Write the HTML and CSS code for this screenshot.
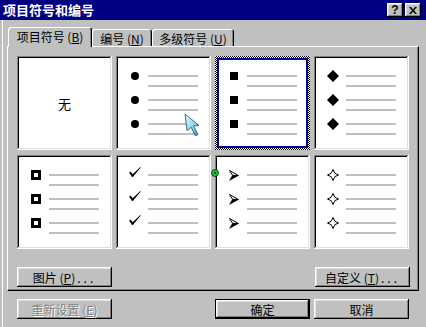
FILE: index.html
```html
<!DOCTYPE html>
<html lang="zh-CN">
<head>
    <meta charset="UTF-8">
    <title>项目符号和编号</title>
    <link rel="stylesheet" href="styles.css">
</head>
<body>

    <!-- Title bar -->
    <div class="titlebar">
        <span class="title">项目符号和编号</span>
        <div class="caption-buttons">
            <button class="cap-btn">?</button>
            <button class="cap-btn">
                <svg width="8" height="7" viewBox="0 0 8 7"><path d="M0 0h2l2 2.5L6 0h2L5 3.5 8 7H6L4 4.5 2 7H0l3-3.5z" fill="#000"/></svg>
            </button>
        </div>
    </div>

    <div class="dialog">
        <!-- Tabs -->
        <div class="tabs">
            <div class="tab active">项目符号 (<u>B</u>)</div>
            <div class="tab tab-num">编号 (<u>N</u>)</div>
            <div class="tab tab-multi">多级符号 (<u>U</u>)</div>
        </div>

        <div class="panel">
            <div class="gallery">
                <div class="cell cell-none">无</div>

                <div class="cell">
                    <div class="item"><span class="mark"><i class="dot"></i></span><span class="lines"></span></div>
                    <div class="item"><span class="mark"><i class="dot"></i></span><span class="lines"></span></div>
                    <div class="item"><span class="mark"><i class="dot"></i></span><span class="lines"></span></div>
                </div>

                <div class="focus">
                    <div class="cell selected">
                        <div class="item"><span class="mark"><i class="square"></i></span><span class="lines"></span></div>
                        <div class="item"><span class="mark"><i class="square"></i></span><span class="lines"></span></div>
                        <div class="item"><span class="mark"><i class="square"></i></span><span class="lines"></span></div>
                    </div>
                </div>

                <div class="cell">
                    <div class="item"><span class="mark"><svg width="12" height="12" viewBox="0 0 12 12"><path d="M6 0l6 6-6 6-6-6z"/></svg></span><span class="lines"></span></div>
                    <div class="item"><span class="mark"><svg width="12" height="12" viewBox="0 0 12 12"><path d="M6 0l6 6-6 6-6-6z"/></svg></span><span class="lines"></span></div>
                    <div class="item"><span class="mark"><svg width="12" height="12" viewBox="0 0 12 12"><path d="M6 0l6 6-6 6-6-6z"/></svg></span><span class="lines"></span></div>
                </div>

                <div class="cell">
                    <div class="item"><span class="mark"><i class="box"></i></span><span class="lines"></span></div>
                    <div class="item"><span class="mark"><i class="box"></i></span><span class="lines"></span></div>
                    <div class="item"><span class="mark"><i class="box"></i></span><span class="lines"></span></div>
                </div>

                <div class="cell">
                    <div class="item"><span class="mark"><svg class="check" width="12" height="10" viewBox="0 0 12 10"><path d="M0 5.5l1.8-.8L3.6 7.2 11.4 0l.4.4L3.8 10H3z"/></svg></span><span class="lines"></span></div>
                    <div class="item"><span class="mark"><svg class="check" width="12" height="10" viewBox="0 0 12 10"><path d="M0 5.5l1.8-.8L3.6 7.2 11.4 0l.4.4L3.8 10H3z"/></svg></span><span class="lines"></span></div>
                    <div class="item"><span class="mark"><svg class="check" width="12" height="10" viewBox="0 0 12 10"><path d="M0 5.5l1.8-.8L3.6 7.2 11.4 0l.4.4L3.8 10H3z"/></svg></span><span class="lines"></span></div>
                </div>

                <div class="cell">
                    <div class="item"><span class="mark"><svg width="10" height="11" viewBox="0 0 10 11"><path d="M.5.5l9 5-6-.2z" fill="#fff" stroke="#000"/><path d="M3.2 5.3L10 5.5 0 11z"/></svg></span><span class="lines"></span></div>
                    <div class="item"><span class="mark"><svg width="10" height="11" viewBox="0 0 10 11"><path d="M.5.5l9 5-6-.2z" fill="#fff" stroke="#000"/><path d="M3.2 5.3L10 5.5 0 11z"/></svg></span><span class="lines"></span></div>
                    <div class="item"><span class="mark"><svg width="10" height="11" viewBox="0 0 10 11"><path d="M.5.5l9 5-6-.2z" fill="#fff" stroke="#000"/><path d="M3.2 5.3L10 5.5 0 11z"/></svg></span><span class="lines"></span></div>
                </div>

                <div class="cell">
                    <div class="item"><span class="mark"><svg width="12" height="12" viewBox="0 0 12 12"><path d="M6 .5Q6.8 5.2 11.5 6 6.8 6.8 6 11.5 5.2 6.8.5 6 5.2 5.2 6 .5z" fill="none" stroke="#000"/></svg></span><span class="lines"></span></div>
                    <div class="item"><span class="mark"><svg width="12" height="12" viewBox="0 0 12 12"><path d="M6 .5Q6.8 5.2 11.5 6 6.8 6.8 6 11.5 5.2 6.8.5 6 5.2 5.2 6 .5z" fill="none" stroke="#000"/></svg></span><span class="lines"></span></div>
                    <div class="item"><span class="mark"><svg width="12" height="12" viewBox="0 0 12 12"><path d="M6 .5Q6.8 5.2 11.5 6 6.8 6.8 6 11.5 5.2 6.8.5 6 5.2 5.2 6 .5z" fill="none" stroke="#000"/></svg></span><span class="lines"></span></div>
                </div>
            </div>

            <div class="panel-actions">
                <button class="btn">图片 (<u>P</u>)<span class="dots">...</span></button>
                <button class="btn">自定义 (<u>T</u>)<span class="dots">...</span></button>
            </div>
        </div>

        <!-- Dialog buttons -->
        <div class="actions">
            <button class="btn" disabled>重新设置 (<u>E</u>)</button>
            <span class="spacer"></span>
            <button class="btn default">确定</button>
            <button class="btn">取消</button>
        </div>
    </div>

    <!-- mouse pointer and the small marker over the gallery -->
    <svg class="pointer" width="18" height="25" viewBox="0 0 18 25">
        <defs>
            <linearGradient id="ptr" x1="0" y1="0" x2="1" y2="1">
                <stop offset="0" stop-color="#e8fbff"/>
                <stop offset="0.6" stop-color="#8cd2ee"/>
                <stop offset="1" stop-color="#3a88b8"/>
            </linearGradient>
        </defs>
        <path d="M1 1l14 11.5-5.5.4 4.5 8.6-2.6 1.4-4.3-8.7-4 3.6z" fill="url(#ptr)" stroke="#2d5f86" stroke-width="0.9"/>
    </svg>
    <span class="marker"></span>

</body>
</html>
```

FILE: styles.css
```css
body {
    margin: 0;
    width: 426px;
    height: 327px;
    overflow: hidden;
    position: relative;
    background-color: #c0c0c0;
    font-family: "Noto Sans CJK SC", "Liberation Sans", sans-serif;
    font-size: 12px;
    color: #000;
}

u {
    text-decoration: underline;
    text-underline-offset: 1px;
}

/* Title bar */
.titlebar {
    height: 20px;
    background-color: #000080;
    display: flex;
    align-items: center;
    justify-content: space-between;
    padding: 0 5px 0 3px;
}

.title {
    color: #fff;
    font-size: 13px;
    font-weight: bold;
    line-height: 20px;
}

.caption-buttons {
    display: flex;
    gap: 2px;
}

.cap-btn {
    width: 16px;
    height: 14px;
    padding: 0;
    border: none;
    background-color: #c0c0c0;
    box-shadow: inset -1px -1px #000, inset 1px 1px #fff, inset -2px -2px #808080, inset 2px 2px #dfdfdf;
    font-family: "Liberation Sans", sans-serif;
    font-size: 12px;
    font-weight: bold;
    line-height: 14px;
    display: flex;
    align-items: center;
    justify-content: center;
}

/* Dialog body */
.dialog {
    margin-left: 2px;
    border-left: 1px solid #fff;
    height: 307px;
}

.tabs {
    display: flex;
    align-items: flex-end;
    padding-top: 7px;
    margin-left: 5px;
}

.tab {
    height: 17px;
    box-sizing: border-box;
    background-color: #c0c0c0;
    border-radius: 3px 3px 0 0;
    box-shadow: inset 1px 1px #fff, inset -1px 0 #000, inset -2px 0 #808080;
    display: flex;
    align-items: center;
    justify-content: center;
    padding-top: 1px;
}

.tab.active {
    width: 84px;
    height: 20px;
    margin-bottom: -1px;
    padding-bottom: 2px;
    position: relative;
    z-index: 1;
}

.tab-num {
    width: 60px;
}

.tab-multi {
    width: 82px;
}

.panel {
    margin-left: 4px;
    width: 412px;
    box-sizing: border-box;
    border: 1px solid;
    border-color: #fff #000 #000 #fff;
    box-shadow: inset -1px -1px #808080;
    padding: 9px 8px 3px 9px;
}

.gallery {
    display: grid;
    grid-template-columns: repeat(4, 95px);
    grid-auto-rows: 94px;
    gap: 5px 4px;
}

.cell {
    background-color: #fff;
    box-shadow: inset -1px -1px #fff, inset 1px 1px #808080, inset -2px -2px #dfdfdf, inset 2px 2px #000;
    padding-top: 15px;
    box-sizing: border-box;
}

.cell-none {
    padding-top: 0;
    display: flex;
    align-items: center;
    justify-content: center;
    font-size: 13px;
}

/* focus frame of the selected style */
.focus {
    padding: 2px;
    background: repeating-conic-gradient(#000 0% 25%, #fff 0% 50%) 0 0 / 2px 2px;
    display: flex;
}

.cell.selected {
    flex: 1;
    box-shadow: none;
    border: 2px solid #0000a0;
    padding-top: 11px;
}

.cell.selected .mark {
    margin-left: 5px;
}

.item {
    display: flex;
    height: 24px;
}

.mark {
    width: 20px;
    height: 10px;
    margin-left: 9px;
    margin-right: 3px;
    display: flex;
    align-items: center;
    justify-content: center;
}

.lines {
    width: 50px;
    display: flex;
    flex-direction: column;
    gap: 8px;
    padding-top: 4px;
}

.lines::before,
.lines::after {
    content: "";
    height: 2px;
    background-color: #c0c0c0;
}

.dot {
    width: 8px;
    height: 8px;
    border-radius: 50%;
    background-color: #000;
}

.square {
    width: 8px;
    height: 8px;
    background-color: #000;
}

.box {
    width: 10px;
    height: 10px;
    box-sizing: border-box;
    border: 3px solid #000;
}

.check {
    margin-top: -6px;
}

/* Buttons */
.btn {
    width: 95px;
    height: 20px;
    padding: 0;
    border: none;
    background-color: #c0c0c0;
    box-shadow: inset -1px -1px #000, inset 1px 1px #fff, inset -2px -2px #808080, inset 2px 2px #dfdfdf;
    font-family: inherit;
    font-size: 12px;
    color: #000;
}

.btn .dots {
    letter-spacing: 3px;
    margin-left: 2px;
}

.btn:disabled {
    color: #808080;
    text-shadow: 1px 1px #fff;
}

.btn.default {
    border: 1px solid #000;
}

.panel-actions {
    display: flex;
    justify-content: space-between;
    margin-top: 18px;
}

.actions {
    display: flex;
    gap: 4px;
    margin-top: 8px;
    padding: 0 17px 0 14px;
}

.spacer {
    flex: 1;
}

/* overlays */
.pointer {
    position: absolute;
    left: 184px;
    top: 113px;
}

.marker {
    position: absolute;
    left: 211px;
    top: 169px;
    width: 8px;
    height: 8px;
    box-sizing: border-box;
    border-radius: 50%;
    border: 1px solid #0a4a0a;
    background: radial-gradient(circle, #2030c0 0 1.5px, #1ec81e 1.5px);
}
```
